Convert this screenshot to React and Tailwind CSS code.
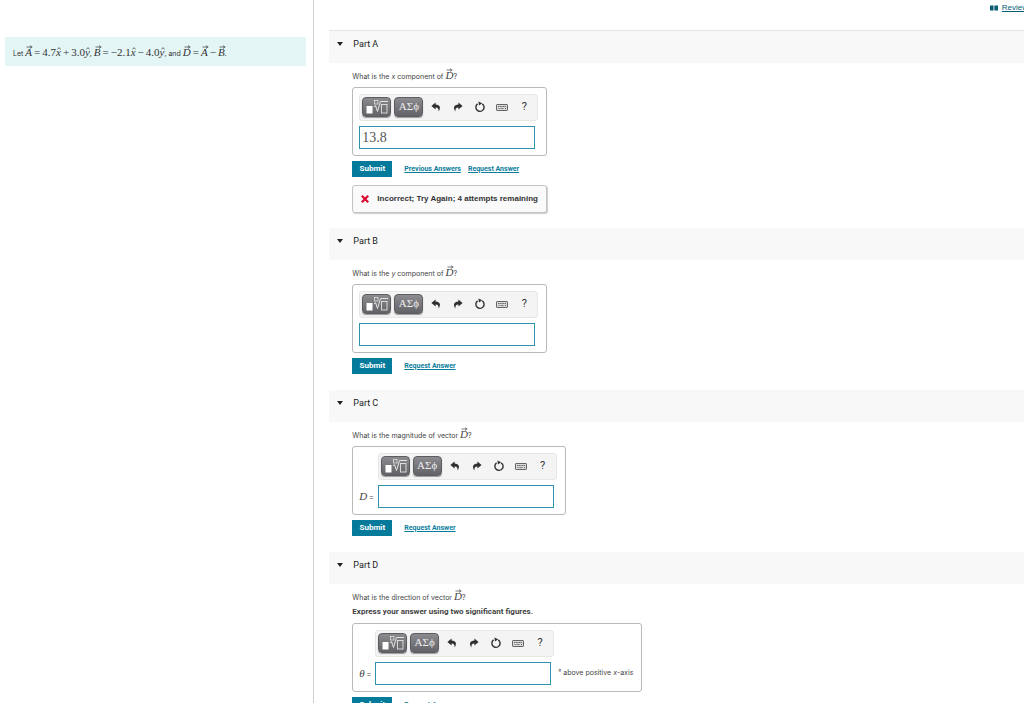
import React from "react";

function Arrow() {
  return (
    <svg viewBox="0 0 8 4" className="absolute top-px left-0 h-1 w-2" aria-hidden="true">
      <path d="M1.5 2H6M5 0.6L7.2 2L5 3.4" fill="none" stroke="currentColor" strokeWidth="0.7" />
    </svg>
  );
}

function Vec({ children }) {
  return (
    <span className="relative inline-block font-['Liberation_Serif',serif] text-[11px] leading-4 italic">
      <Arrow />
      {children}
    </span>
  );
}

function Unit({ children }) {
  return (
    <span className="relative inline-block italic">
      <svg viewBox="0 0 4 3" className="absolute top-[3px] left-px h-[3px] w-1" aria-hidden="true">
        <path d="M0.5 2.4L2 0.6L3.5 2.4" fill="none" stroke="currentColor" strokeWidth="0.7" />
      </svg>
      {children}
    </span>
  );
}

function Op({ children }) {
  return <span className="mx-0.5">{children}</span>;
}

function MathText({ children }) {
  return <span className="font-['Liberation_Serif',serif] text-[11px] leading-4">{children}</span>;
}

function TemplateIcon() {
  return (
    <svg viewBox="0 0 23 16" className="h-4 w-[23px]" aria-hidden="true">
      <rect x="1.5" y="7" width="6" height="7.5" fill="#fff" />
      <rect x="9.5" y="1.5" width="3.5" height="3.5" fill="none" stroke="#e2e2e2" strokeWidth="0.8" />
      <path d="M9 8L10.5 6.5L12.5 12.5L15.5 2.5H23" fill="none" stroke="#e2e2e2" strokeWidth="1" />
      <rect x="16.5" y="5.5" width="5.5" height="8.5" fill="none" stroke="#e2e2e2" strokeWidth="0.9" />
    </svg>
  );
}

function UndoIcon({ flip }) {
  return (
    <svg viewBox="0 0 10 10" className={flip ? "size-2.5 -scale-x-100" : "size-2.5"} aria-hidden="true">
      <path d="M4.6 0.5L0.4 4L4.6 7.5V5.5C6.8 5.4 7.8 6.5 7.6 9.4C10 6.2 9.4 2.8 4.6 2.5Z" fill="#303030" />
    </svg>
  );
}

function ResetIcon() {
  return (
    <svg viewBox="0 0 12 12" className="size-3" aria-hidden="true">
      <path d="M8.2 2.8A4.1 4.1 0 1 1 3.6 2.9" fill="none" stroke="#303030" strokeWidth="1.4" />
      <path d="M4.4 0.4L8.2 2.2L5 4.6Z" fill="#303030" />
    </svg>
  );
}

function KeyboardIcon() {
  return (
    <svg viewBox="0 0 12 7" className="h-[7px] w-3" aria-hidden="true">
      <rect x="0.5" y="0.5" width="11" height="6" rx="0.6" fill="#dadada" stroke="#555" strokeWidth="0.9" />
      <path d="M2 2.5H10M2.5 4.5H3.5M4.5 4.5H8M9 4.5H10" stroke="#555" strokeWidth="0.9" strokeDasharray="1.2 0.5" />
    </svg>
  );
}

const darkButton =
  "flex h-5 w-[29px] justify-center rounded-sm border border-[#5c5c61] bg-linear-to-b from-[#8b8b90] to-[#626267] shadow-[0_1px_1px_#999]";
const toolButton = "flex h-5 w-[22px] items-center justify-center";

function Toolbar() {
  return (
    <div className="flex h-[27px] items-start rounded-[3px] border border-[#e6e6e6] bg-[#f4f4f4] px-0.5 pt-0.5">
      <button type="button" aria-label="Templates" className={darkButton + " items-center"}>
        <TemplateIcon />
      </button>
      <button
        type="button"
        aria-label="Symbols"
        className={darkButton + " mr-0.5 ml-[3px] items-start font-['Liberation_Serif',serif] text-[11px] leading-4 text-[#eeeeee]"}
      >
        ΑΣϕ
      </button>
      <button type="button" aria-label="Undo" className={toolButton}>
        <UndoIcon />
      </button>
      <button type="button" aria-label="Redo" className={toolButton}>
        <UndoIcon flip />
      </button>
      <button type="button" aria-label="Reset" className={toolButton}>
        <ResetIcon />
      </button>
      <button type="button" aria-label="Keyboard shortcuts" className={toolButton}>
        <KeyboardIcon />
      </button>
      <button type="button" aria-label="Help" className={toolButton + " text-[11px] text-[#303030]"}>
        ?
      </button>
    </div>
  );
}

function AnswerBox({ id, label, suffix, value }) {
  return (
    <div className="w-fit rounded-[3px] border border-[#b9b9b9] py-1.5 pr-2 pl-1.5">
      <div className="grid grid-cols-[auto_auto_auto] items-center gap-y-[5px]">
        <div className="col-start-2">
          <Toolbar />
        </div>
        {label ? (
          <label htmlFor={id} className="col-start-1 row-start-2 pr-1 leading-4 whitespace-nowrap">
            {label}
          </label>
        ) : null}
        <input
          id={id}
          aria-label={label ? undefined : "Answer"}
          defaultValue={value}
          className="col-start-2 row-start-2 h-[23px] w-44 border border-[#2f93ad] bg-white px-0.5 font-['Liberation_Serif',serif] text-sm text-[#555] outline-none"
        />
        {suffix ? (
          <span className="col-start-3 row-start-2 pl-1 font-[Inter,Arial,sans-serif] text-[7px] whitespace-nowrap">
            {suffix}
          </span>
        ) : null}
      </div>
    </div>
  );
}

function Part({ name, question, note, answer, previous, feedback, first }) {
  return (
    <section className={feedback ? "pb-[15px]" : "pb-4"}>
      <h2
        className={
          "flex items-start bg-[#f8f8f8] pt-[5px] text-[9px] leading-4 text-[#222] " +
          (first ? "h-[33px] border-t border-[#e4e4e4]" : "h-8")
        }
      >
        <button type="button" className="flex items-center" aria-expanded="true">
          <svg viewBox="0 0 6 4" className="mr-2.5 ml-2 h-1 w-1.5" aria-hidden="true">
            <path d="M0 0H6L3 4Z" fill="#222" />
          </svg>
          {name}
        </button>
      </h2>
      <div className="pl-[23px]">
        <p className="h-6 pt-1 font-[Inter,Arial,sans-serif] text-[7px] leading-4">{question}</p>
        {note ? <p className="h-[15px] leading-[8px] font-bold">{note}</p> : null}
        {answer}
        <div className="mt-[5px] flex items-center">
          <button type="button" className="h-4 w-10 bg-[#057a9b] text-[8px] font-bold text-white">
            Submit
          </button>
          <div className="ml-3 flex gap-[7px] text-[7px] font-bold text-[#0b7d9c]">
            {previous ? (
              <a href="#previous" className="underline">
                Previous Answers
              </a>
            ) : null}
            <a href="#request" className="underline">
              Request Answer
            </a>
          </div>
        </div>
        {feedback ? (
          <div className="mt-2 flex h-7 w-fit items-center rounded-[3px] border border-[#c4c4c4] bg-[#fafafa] px-2 font-['Liberation_Sans',Arial,sans-serif] text-[8px] font-bold text-[#333] shadow-[1px_1px_1px_#ccc]">
            <svg viewBox="0 0 8 8" className="mr-2 size-2" aria-hidden="true">
              <path d="M0.8 0.8L7.2 7.2M7.2 0.8L0.8 7.2" stroke="#d9072e" strokeWidth="2.2" />
            </svg>
            {feedback}
          </div>
        ) : null}
      </div>
    </section>
  );
}

export default function App() {
  return (
    <div className="flex h-screen overflow-hidden bg-white font-[Roboto,Arial,sans-serif] text-[8px] text-[#444]">
      <aside className="w-[30.7%] shrink-0 border-r border-[#ccd0d4] pt-[37px] pr-[7px] pl-[5px]">
        <p className="flex h-[29px] items-center bg-[#e4f5f6] px-2 pt-0.5 font-[Inter,Arial,sans-serif] text-[7px] leading-4 whitespace-nowrap text-[#333]">
          <span>
            Let <Vec>A</Vec>
            <MathText>
              <Op>=</Op>4.7<Unit>x</Unit>
              <Op>+</Op>3.0<Unit>y</Unit>
            </MathText>
            , <Vec>B</Vec>
            <MathText>
              <Op>=</Op>−2.1<Unit>x</Unit>
              <Op>−</Op>4.0<Unit>y</Unit>
            </MathText>
            , and <Vec>D</Vec>
            <MathText>
              <Op>=</Op>
            </MathText>
            <Vec>A</Vec>
            <MathText>
              <Op>−</Op>
            </MathText>
            <Vec>B</Vec>.
          </span>
        </p>
      </aside>
      <main className="min-w-0 flex-1 overflow-hidden pl-[15px]">
        <header className="flex h-[30px] justify-end">
          <a href="#review" className="-mr-1 flex h-4 items-center text-[8px] text-[#0b6075]">
            <svg viewBox="0 0 8 6" className="mr-1 h-1.5 w-2" aria-hidden="true">
              <path d="M0 0.5H3.6V5.5H0ZM4.4 0.5H8V5.5H4.4Z" fill="#0b6075" />
            </svg>
            <span className="font-['Liberation_Sans',Arial,sans-serif] underline">Review</span>
          </a>
        </header>
        <Part
          first
          name="Part A"
          question={
            <>
              What is the <i>x</i> component of <Vec>D</Vec>?
            </>
          }
          answer={<AnswerBox id="a" value="13.8" />}
          previous
          feedback="Incorrect; Try Again; 4 attempts remaining"
        />
        <Part
          name="Part B"
          question={
            <>
              What is the <i>y</i> component of <Vec>D</Vec>?
            </>
          }
          answer={<AnswerBox id="b" />}
        />
        <Part
          name="Part C"
          question={
            <>
              What is the magnitude of vector <Vec>D</Vec>?
            </>
          }
          answer={
            <AnswerBox
              id="c"
              label={
                <>
                  <span className="font-['Liberation_Serif',serif] text-[11px] italic">D</span> =
                </>
              }
            />
          }
        />
        <Part
          name="Part D"
          question={
            <>
              What is the direction of vector <Vec>D</Vec>?
            </>
          }
          note="Express your answer using two significant figures."
          answer={
            <AnswerBox
              id="d"
              label={
                <>
                  <span className="font-['Liberation_Serif',serif] text-[11px] italic">θ</span> =
                </>
              }
              suffix={
                <>
                  ° above positive <i>x</i>-axis
                </>
              }
            />
          }
        />
      </main>
    </div>
  );
}
